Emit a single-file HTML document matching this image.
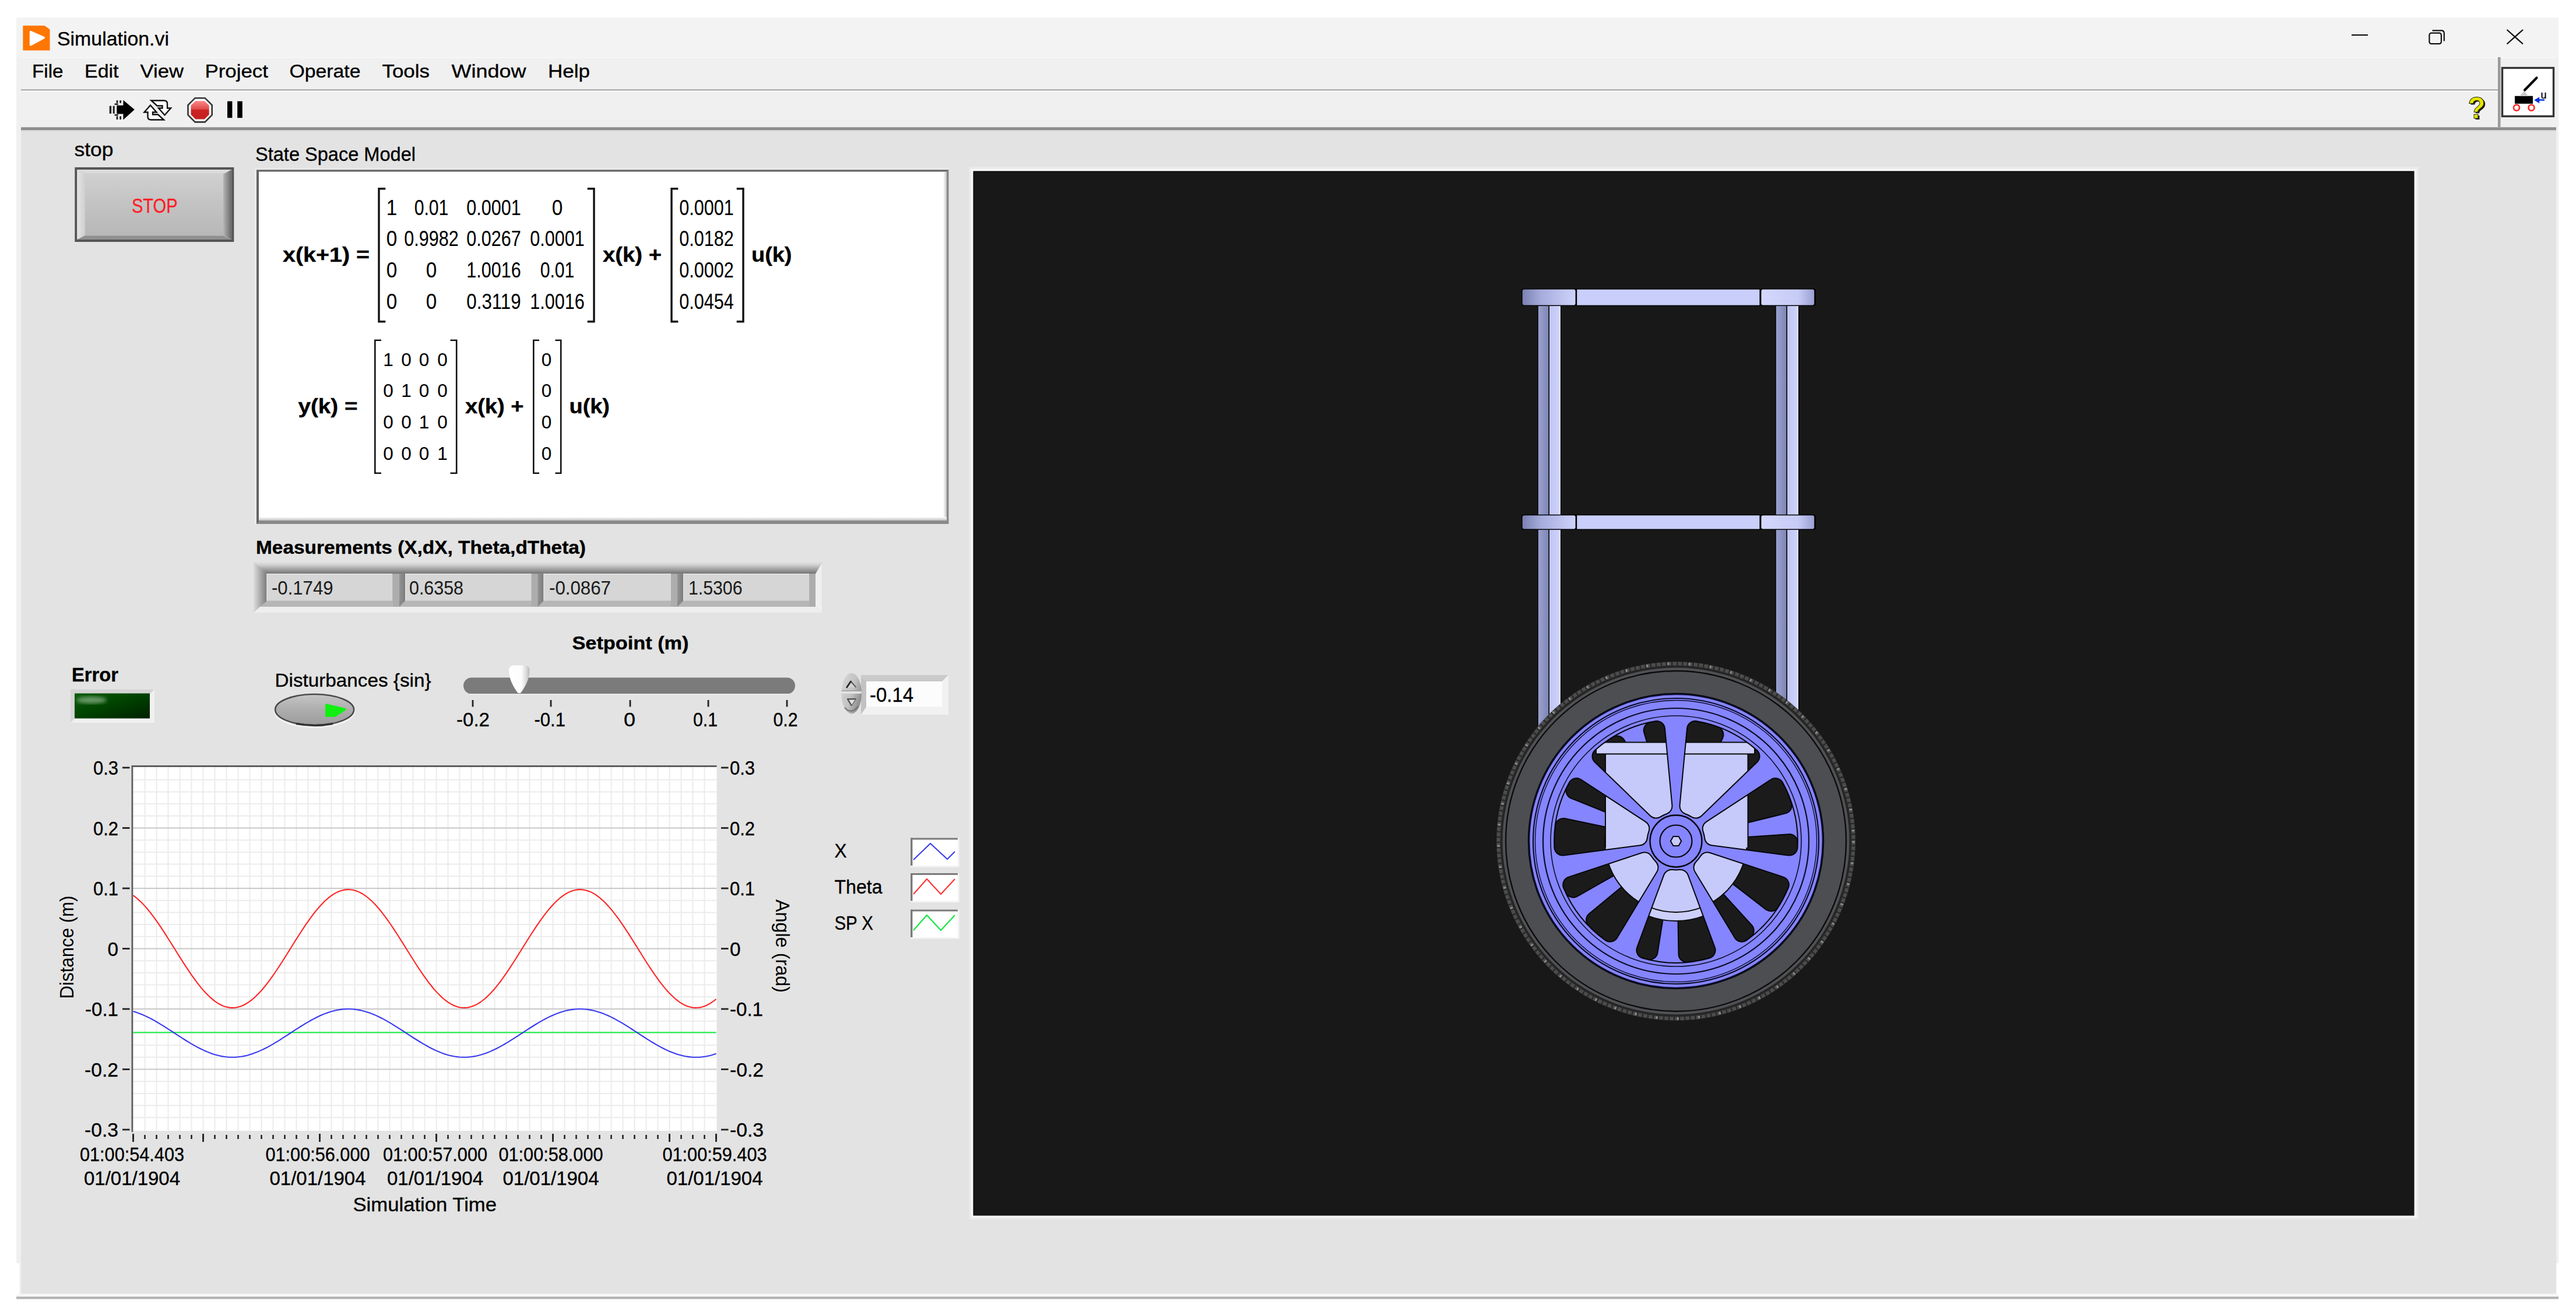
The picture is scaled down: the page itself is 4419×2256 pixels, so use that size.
<!DOCTYPE html>
<html><head><meta charset="utf-8"><title>Simulation.vi</title>
<style>
html,body{margin:0;padding:0;background:#fff;}
body{width:4419px;height:2256px;overflow:hidden;font-family:"Liberation Sans",sans-serif;}
svg{display:block;font-family:"Liberation Sans",sans-serif;}
text{white-space:pre;}
</style></head><body>
<svg width="4419" height="2256" viewBox="0 0 4419 2256">
<rect x="28.0" y="30.0" width="4361.0" height="2199.0" fill="#f0f0f0" />
<rect x="28.0" y="30.0" width="4361.0" height="68.0" fill="#f3f3f3" />
<rect x="28.0" y="2219.5" width="4361.0" height="5.0" fill="#f7f7f7" />
<rect x="28.0" y="2224.5" width="4361.0" height="4.0" fill="#b2b2b2" />
<rect x="36.0" y="223.0" width="4349.0" height="1996.5" fill="#e3e3e3" />
<rect x="28.0" y="2167.0" width="5.5" height="53.0" fill="#fff" />
<rect x="4385.5" y="2167.0" width="3.5" height="53.0" fill="#fff" />
<rect x="36.0" y="98.0" width="4353.0" height="1.5" fill="#f8f8f8" />
<rect x="36.0" y="153.3" width="4250.0" height="2.2" fill="#a0a0a0" />
<rect x="36.0" y="155.5" width="4250.0" height="2.0" fill="#f8f8f8" />
<rect x="4285.0" y="98.0" width="4.5" height="122.0" fill="#9a9a9a" />
<linearGradient id="tbl" x1="0" y1="0" x2="0" y2="1"><stop offset="0" stop-color="#b0b0b0"/><stop offset=".35" stop-color="#8a8a8a"/><stop offset="1" stop-color="#8e8e8e"/></linearGradient>
<rect x="36.0" y="218.0" width="4349.0" height="5.5" fill="url(#tbl)" />
<rect x="36.0" y="223.5" width="4349.0" height="2.0" fill="#dadada" />
<path d="M39.4 43.9 H76.6 L85.5 50.6 V86.6 H39.4 Z" fill="#ff7600"/>
<path d="M52.6 54.6 L75.2 64.7 L52.6 76.8 Z" fill="#fff" stroke="#fff" stroke-width="3.6" stroke-linejoin="round"/>
<text x="98.0" y="77.5" font-size="33.5" stroke="#000" stroke-width="0.35" fill="#000" text-anchor="start" textLength="192.0" lengthAdjust="spacingAndGlyphs" >Simulation.vi</text>
<rect x="4034.0" y="59.0" width="28.0" height="2.2" fill="#111" />
<rect x="4167.4" y="56.7" width="20.5" height="18.5" rx="3.5" fill="none" stroke="#111" stroke-width="2.2"/>
<path d="M4172.5 52.3 H4188 Q4192.8 52.3 4192.8 57 V70.5" fill="none" stroke="#111" stroke-width="2.2"/>
<path d="M4300.5 51 L4328 75.5 M4328 51 L4300.5 75.5" stroke="#111" stroke-width="2.3" fill="none"/>
<text x="55.0" y="133.0" font-size="30.8" stroke="#000" stroke-width="0.35" fill="#000" text-anchor="start" textLength="53.5" lengthAdjust="spacingAndGlyphs" >File</text>
<text x="145.0" y="133.0" font-size="30.8" stroke="#000" stroke-width="0.35" fill="#000" text-anchor="start" textLength="58.5" lengthAdjust="spacingAndGlyphs" >Edit</text>
<text x="240.5" y="133.0" font-size="30.8" stroke="#000" stroke-width="0.35" fill="#000" text-anchor="start" textLength="74.5" lengthAdjust="spacingAndGlyphs" >View</text>
<text x="351.5" y="133.0" font-size="30.8" stroke="#000" stroke-width="0.35" fill="#000" text-anchor="start" textLength="108.5" lengthAdjust="spacingAndGlyphs" >Project</text>
<text x="496.5" y="133.0" font-size="30.8" stroke="#000" stroke-width="0.35" fill="#000" text-anchor="start" textLength="122.0" lengthAdjust="spacingAndGlyphs" >Operate</text>
<text x="655.5" y="133.0" font-size="30.8" stroke="#000" stroke-width="0.35" fill="#000" text-anchor="start" textLength="81.5" lengthAdjust="spacingAndGlyphs" >Tools</text>
<text x="774.5" y="133.0" font-size="30.8" stroke="#000" stroke-width="0.35" fill="#000" text-anchor="start" textLength="128.0" lengthAdjust="spacingAndGlyphs" >Window</text>
<text x="940.0" y="133.0" font-size="30.8" stroke="#000" stroke-width="0.35" fill="#000" text-anchor="start" textLength="72.0" lengthAdjust="spacingAndGlyphs" >Help</text>
<path d="M200.3 180.7 H211.4 V171.7 L230.8 188 L211.4 205.5 V195.4 H200.3 Z" fill="#000"/>
<rect x="187.7" y="181.7" width="3.4" height="13.2" fill="#222" />
<rect x="193.7" y="181.7" width="3.0" height="13.2" fill="#222" />
<rect x="199.6" y="172.2" width="2.8" height="4.6" fill="#222" />
<rect x="199.6" y="199.4" width="2.8" height="5.6" fill="#222" />
<rect x="205.2" y="172.2" width="2.8" height="4.6" fill="#222" />
<rect x="205.2" y="199.4" width="2.8" height="5.6" fill="#222" />
<rect x="196.6" y="177.4" width="6.0" height="2.6" fill="#222" />
<rect x="196.6" y="196.0" width="6.0" height="2.6" fill="#222" />
<g fill="#fff" stroke="#111" stroke-width="2.4" stroke-linejoin="miter"><path d="M259.5 172.5 H281.5 Q287 172.5 287 178 V185.5 H293 L282.5 197.5 L272 185.5 H278.5 V181.5 H269.5 Z"/><path d="M281 205.5 H259 Q253.5 205.5 253.5 200 V192.5 H247.5 L258 180.5 L268.5 192.5 H262 V196.5 H271 Z"/></g>
<linearGradient id="abg" x1="0" y1="0" x2="0" y2="1"><stop offset="0" stop-color="#f88"/><stop offset=".45" stop-color="#e04a4a"/><stop offset=".5" stop-color="#cc2222"/><stop offset="1" stop-color="#c42020"/></linearGradient>
<polygon points="334.6,168.2 351.6,168.2 363.7,180.3 363.7,197.3 351.6,209.4 334.6,209.4 322.5,197.3 322.5,180.3" fill="#fafafa" stroke="#333" stroke-width="2.6"/>
<polygon points="335.3,173.2 350.9,173.2 358.7,181.0 358.7,196.6 350.9,204.4 335.3,204.4 327.5,196.6 327.5,181.0" fill="url(#abg)"/>
<rect x="390.0" y="173.7" width="8.4" height="28.5" fill="#000" />
<rect x="407.2" y="173.7" width="8.6" height="28.5" fill="#000" />
<text x="4236" y="205" font-size="52" font-weight="bold" fill="#1a1a1a" textLength="30" lengthAdjust="spacingAndGlyphs">?</text>
<text x="4233.5" y="202.5" font-size="52" font-weight="bold" fill="#e6e600" stroke="#2a2a00" stroke-width="1" textLength="30" lengthAdjust="spacingAndGlyphs">?</text>
<rect x="4292.5" y="116.5" width="88" height="83" fill="#fff" stroke="#333" stroke-width="3.4"/>
<rect x="4314.0" y="164.7" width="31.0" height="13.2" fill="#000" />
<path d="M4322 165 L4330.5 155.5 L4337 165 Z" fill="#ccc"/>
<line x1="4331.0" y1="154.5" x2="4351.5" y2="133.5" stroke="#000" stroke-width="4.2" stroke-linecap="round"/>
<circle cx="4317" cy="184.7" r="5" fill="#fff" stroke="#f22" stroke-width="2.6"/>
<circle cx="4342.5" cy="184.7" r="5" fill="#fff" stroke="#f22" stroke-width="2.6"/>
<path d="M4365 171.5 H4352 M4355 168.5 L4349.5 171.8 L4355 175.2 Z" stroke="#03d" stroke-width="2.4" fill="#03d"/>
<text x="4358.5" y="168.8" font-size="18" stroke="#000" stroke-width="0.35" fill="#000" text-anchor="start" textLength="10.0" lengthAdjust="spacingAndGlyphs" >u</text>
<text x="127.5" y="268.0" font-size="33.5" stroke="#000" stroke-width="0.35" fill="#000" text-anchor="start" textLength="67.0" lengthAdjust="spacingAndGlyphs" >stop</text>
<linearGradient id="sbf" x1="0" y1="0" x2="0" y2="1"><stop offset="0" stop-color="#d2d2d2"/><stop offset=".45" stop-color="#c4c4c4"/><stop offset="1" stop-color="#b6b6b6"/></linearGradient>
<linearGradient id="sbl" x1="0" y1="0" x2="1" y2="0"><stop offset="0" stop-color="#e4e4e4"/><stop offset="1" stop-color="#cfcfcf"/></linearGradient>
<linearGradient id="sbr" x1="0" y1="0" x2="1" y2="0"><stop offset="0" stop-color="#b4b4b4"/><stop offset="1" stop-color="#686868"/></linearGradient>
<rect x="128.3" y="287.0" width="273.0" height="128.0" fill="#555" />
<rect x="132.3" y="291.0" width="265.0" height="120.0" fill="url(#sbf)" />
<path d="M132.3 291 L146 299 V403 L132.3 411 Z" fill="url(#sbl)"/>
<path d="M397.3 291 L383 299 V403 L397.3 411 Z" fill="url(#sbr)"/>
<path d="M132.3 291 H397.3 L383 297 H146 Z" fill="#dcdcdc"/>
<path d="M132.3 411 H397.3 L383 404.5 H146 Z" fill="#909090"/>
<text x="226.0" y="365.4" font-size="35" stroke="#ff1c24" stroke-width="0.35" fill="#ff1c24" text-anchor="start" textLength="78.5" lengthAdjust="spacingAndGlyphs" >STOP</text>
<text x="438.0" y="276.0" font-size="33.5" stroke="#000" stroke-width="0.35" fill="#000" text-anchor="start" textLength="275.0" lengthAdjust="spacingAndGlyphs" >State Space Model</text>
<rect x="436.0" y="288.0" width="1192.0" height="612.0" fill="#e9e9e9" />
<rect x="440.0" y="291.5" width="1187.5" height="607.5" fill="#8a8a8a" />
<path d="M440 291.5 H1627.5 L1624 294.6 H444 V895 L440 899 Z" fill="#646464"/>
<linearGradient id="ssr" x1="0" y1="0" x2="1" y2="0"><stop offset="0" stop-color="#fff"/><stop offset="1" stop-color="#c4c4c4"/></linearGradient>
<linearGradient id="ssb" x1="0" y1="0" x2="0" y2="1"><stop offset="0" stop-color="#fff"/><stop offset="1" stop-color="#c4c4c4"/></linearGradient>
<rect x="444.0" y="294.6" width="1180.0" height="598.0" fill="#fff" />
<rect x="1618.0" y="295.0" width="6.0" height="597.5" fill="url(#ssr)" />
<rect x="444.5" y="887.0" width="1179.5" height="5.5" fill="url(#ssb)" />
<text x="485.0" y="449.0" font-size="34.5" font-weight="bold" stroke="#000" stroke-width="0.4" fill="#000" text-anchor="start" textLength="149.0" lengthAdjust="spacingAndGlyphs" >x(k+1) =</text>
<path d="M661.3 323.7 H650.0 V551.8 H661.3 M1007.7 323.7 H1019.0 V551.8 H1007.7" fill="none" stroke="#111" stroke-width="3.4"/>
<text x="672.0" y="368.6" font-size="36" stroke="#000" stroke-width="0.1" fill="#000" text-anchor="middle" textLength="18.5" lengthAdjust="spacingAndGlyphs" >1</text>
<text x="740.0" y="368.6" font-size="36" stroke="#000" stroke-width="0.1" fill="#000" text-anchor="middle" textLength="58.7" lengthAdjust="spacingAndGlyphs" >0.01</text>
<text x="847.0" y="368.6" font-size="36" stroke="#000" stroke-width="0.1" fill="#000" text-anchor="middle" textLength="93.3" lengthAdjust="spacingAndGlyphs" >0.0001</text>
<text x="956.0" y="368.6" font-size="36" stroke="#000" stroke-width="0.1" fill="#000" text-anchor="middle" textLength="18.5" lengthAdjust="spacingAndGlyphs" >0</text>
<text x="672.0" y="422.3" font-size="36" stroke="#000" stroke-width="0.1" fill="#000" text-anchor="middle" textLength="18.5" lengthAdjust="spacingAndGlyphs" >0</text>
<text x="740.0" y="422.3" font-size="36" stroke="#000" stroke-width="0.1" fill="#000" text-anchor="middle" textLength="93.3" lengthAdjust="spacingAndGlyphs" >0.9982</text>
<text x="847.0" y="422.3" font-size="36" stroke="#000" stroke-width="0.1" fill="#000" text-anchor="middle" textLength="93.3" lengthAdjust="spacingAndGlyphs" >0.0267</text>
<text x="956.0" y="422.3" font-size="36" stroke="#000" stroke-width="0.1" fill="#000" text-anchor="middle" textLength="93.3" lengthAdjust="spacingAndGlyphs" >0.0001</text>
<text x="672.0" y="476.0" font-size="36" stroke="#000" stroke-width="0.1" fill="#000" text-anchor="middle" textLength="18.5" lengthAdjust="spacingAndGlyphs" >0</text>
<text x="740.0" y="476.0" font-size="36" stroke="#000" stroke-width="0.1" fill="#000" text-anchor="middle" textLength="18.5" lengthAdjust="spacingAndGlyphs" >0</text>
<text x="847.0" y="476.0" font-size="36" stroke="#000" stroke-width="0.1" fill="#000" text-anchor="middle" textLength="93.3" lengthAdjust="spacingAndGlyphs" >1.0016</text>
<text x="956.0" y="476.0" font-size="36" stroke="#000" stroke-width="0.1" fill="#000" text-anchor="middle" textLength="58.7" lengthAdjust="spacingAndGlyphs" >0.01</text>
<text x="672.0" y="529.7" font-size="36" stroke="#000" stroke-width="0.1" fill="#000" text-anchor="middle" textLength="18.5" lengthAdjust="spacingAndGlyphs" >0</text>
<text x="740.0" y="529.7" font-size="36" stroke="#000" stroke-width="0.1" fill="#000" text-anchor="middle" textLength="18.5" lengthAdjust="spacingAndGlyphs" >0</text>
<text x="847.0" y="529.7" font-size="36" stroke="#000" stroke-width="0.1" fill="#000" text-anchor="middle" textLength="93.3" lengthAdjust="spacingAndGlyphs" >0.3119</text>
<text x="956.0" y="529.7" font-size="36" stroke="#000" stroke-width="0.1" fill="#000" text-anchor="middle" textLength="93.3" lengthAdjust="spacingAndGlyphs" >1.0016</text>
<text x="1034.0" y="449.0" font-size="34.5" font-weight="bold" stroke="#000" stroke-width="0.4" fill="#000" text-anchor="start" textLength="101.0" lengthAdjust="spacingAndGlyphs" >x(k) +</text>
<path d="M1163.3 323.7 H1152.0 V551.8 H1163.3 M1263.7 323.7 H1275.0 V551.8 H1263.7" fill="none" stroke="#111" stroke-width="3.4"/>
<text x="1212.0" y="368.6" font-size="36" stroke="#000" stroke-width="0.1" fill="#000" text-anchor="middle" textLength="93.3" lengthAdjust="spacingAndGlyphs" >0.0001</text>
<text x="1212.0" y="422.3" font-size="36" stroke="#000" stroke-width="0.1" fill="#000" text-anchor="middle" textLength="93.3" lengthAdjust="spacingAndGlyphs" >0.0182</text>
<text x="1212.0" y="476.0" font-size="36" stroke="#000" stroke-width="0.1" fill="#000" text-anchor="middle" textLength="93.3" lengthAdjust="spacingAndGlyphs" >0.0002</text>
<text x="1212.0" y="529.7" font-size="36" stroke="#000" stroke-width="0.1" fill="#000" text-anchor="middle" textLength="93.3" lengthAdjust="spacingAndGlyphs" >0.0454</text>
<text x="1289.0" y="449.0" font-size="34.5" font-weight="bold" stroke="#000" stroke-width="0.4" fill="#000" text-anchor="start" textLength="69.5" lengthAdjust="spacingAndGlyphs" >u(k)</text>
<text x="511.5" y="709.0" font-size="34.5" font-weight="bold" stroke="#000" stroke-width="0.4" fill="#000" text-anchor="start" textLength="102.0" lengthAdjust="spacingAndGlyphs" >y(k) =</text>
<path d="M654.0 583.8 H643.3 V811.7 H654.0 M772.5 583.8 H783.2 V811.7 H772.5" fill="none" stroke="#111" stroke-width="2.6"/>
<text x="666.0" y="627.5" font-size="31.5" stroke="#000" stroke-width="0.1" fill="#000" text-anchor="middle" textLength="17.5" lengthAdjust="spacingAndGlyphs" >1</text>
<text x="697.0" y="627.5" font-size="31.5" stroke="#000" stroke-width="0.1" fill="#000" text-anchor="middle" textLength="17.5" lengthAdjust="spacingAndGlyphs" >0</text>
<text x="727.5" y="627.5" font-size="31.5" stroke="#000" stroke-width="0.1" fill="#000" text-anchor="middle" textLength="17.5" lengthAdjust="spacingAndGlyphs" >0</text>
<text x="759.0" y="627.5" font-size="31.5" stroke="#000" stroke-width="0.1" fill="#000" text-anchor="middle" textLength="17.5" lengthAdjust="spacingAndGlyphs" >0</text>
<text x="666.0" y="681.3" font-size="31.5" stroke="#000" stroke-width="0.1" fill="#000" text-anchor="middle" textLength="17.5" lengthAdjust="spacingAndGlyphs" >0</text>
<text x="697.0" y="681.3" font-size="31.5" stroke="#000" stroke-width="0.1" fill="#000" text-anchor="middle" textLength="17.5" lengthAdjust="spacingAndGlyphs" >1</text>
<text x="727.5" y="681.3" font-size="31.5" stroke="#000" stroke-width="0.1" fill="#000" text-anchor="middle" textLength="17.5" lengthAdjust="spacingAndGlyphs" >0</text>
<text x="759.0" y="681.3" font-size="31.5" stroke="#000" stroke-width="0.1" fill="#000" text-anchor="middle" textLength="17.5" lengthAdjust="spacingAndGlyphs" >0</text>
<text x="666.0" y="735.1" font-size="31.5" stroke="#000" stroke-width="0.1" fill="#000" text-anchor="middle" textLength="17.5" lengthAdjust="spacingAndGlyphs" >0</text>
<text x="697.0" y="735.1" font-size="31.5" stroke="#000" stroke-width="0.1" fill="#000" text-anchor="middle" textLength="17.5" lengthAdjust="spacingAndGlyphs" >0</text>
<text x="727.5" y="735.1" font-size="31.5" stroke="#000" stroke-width="0.1" fill="#000" text-anchor="middle" textLength="17.5" lengthAdjust="spacingAndGlyphs" >1</text>
<text x="759.0" y="735.1" font-size="31.5" stroke="#000" stroke-width="0.1" fill="#000" text-anchor="middle" textLength="17.5" lengthAdjust="spacingAndGlyphs" >0</text>
<text x="666.0" y="788.9" font-size="31.5" stroke="#000" stroke-width="0.1" fill="#000" text-anchor="middle" textLength="17.5" lengthAdjust="spacingAndGlyphs" >0</text>
<text x="697.0" y="788.9" font-size="31.5" stroke="#000" stroke-width="0.1" fill="#000" text-anchor="middle" textLength="17.5" lengthAdjust="spacingAndGlyphs" >0</text>
<text x="727.5" y="788.9" font-size="31.5" stroke="#000" stroke-width="0.1" fill="#000" text-anchor="middle" textLength="17.5" lengthAdjust="spacingAndGlyphs" >0</text>
<text x="759.0" y="788.9" font-size="31.5" stroke="#000" stroke-width="0.1" fill="#000" text-anchor="middle" textLength="17.5" lengthAdjust="spacingAndGlyphs" >1</text>
<text x="798.0" y="709.0" font-size="34.5" font-weight="bold" stroke="#000" stroke-width="0.4" fill="#000" text-anchor="start" textLength="100.5" lengthAdjust="spacingAndGlyphs" >x(k) +</text>
<path d="M925.0 583.8 H915.3 V811.7 H925.0 M952.5 583.8 H962.2 V811.7 H952.5" fill="none" stroke="#111" stroke-width="2.6"/>
<text x="937.5" y="627.5" font-size="31.5" stroke="#000" stroke-width="0.1" fill="#000" text-anchor="middle" textLength="17.5" lengthAdjust="spacingAndGlyphs" >0</text>
<text x="937.5" y="681.3" font-size="31.5" stroke="#000" stroke-width="0.1" fill="#000" text-anchor="middle" textLength="17.5" lengthAdjust="spacingAndGlyphs" >0</text>
<text x="937.5" y="735.1" font-size="31.5" stroke="#000" stroke-width="0.1" fill="#000" text-anchor="middle" textLength="17.5" lengthAdjust="spacingAndGlyphs" >0</text>
<text x="937.5" y="788.9" font-size="31.5" stroke="#000" stroke-width="0.1" fill="#000" text-anchor="middle" textLength="17.5" lengthAdjust="spacingAndGlyphs" >0</text>
<text x="976.5" y="709.0" font-size="34.5" font-weight="bold" stroke="#000" stroke-width="0.4" fill="#000" text-anchor="start" textLength="69.5" lengthAdjust="spacingAndGlyphs" >u(k)</text>
<text x="439.0" y="950.0" font-size="31" font-weight="bold" stroke="#000" stroke-width="0.4" fill="#000" text-anchor="start" textLength="566.0" lengthAdjust="spacingAndGlyphs" >Measurements (X,dX, Theta,dTheta)</text>
<linearGradient id="art" x1="0" y1="0" x2="0" y2="1"><stop offset="0" stop-color="#e2e2e2"/><stop offset=".25" stop-color="#d0d0d0"/><stop offset="1" stop-color="#727272"/></linearGradient>
<linearGradient id="arl" x1="0" y1="0" x2="1" y2="0"><stop offset="0" stop-color="#dcdcdc"/><stop offset=".3" stop-color="#c0c0c0"/><stop offset="1" stop-color="#7c7c7c"/></linearGradient>
<linearGradient id="arg" x1="0" y1="0" x2="1" y2="0"><stop offset="0" stop-color="#949494"/><stop offset="1" stop-color="#7c7c7c"/></linearGradient>
<rect x="435.0" y="964.0" width="975.5" height="87.0" fill="#b6b6b6" />
<path d="M435 964 H1410.5 L1399 984.5 H457.5 Z" fill="url(#art)"/>
<path d="M435 964 L457.5 984.5 V1031 L435 1051 Z" fill="url(#arl)"/>
<path d="M435 1051 L446 1041 H1399 L1410.5 1051 Z" fill="#eeeeee"/>
<path d="M1399 984.5 L1410.5 965 V1051 L1399 1041 Z" fill="#efefef"/>
<rect x="1388.7" y="984.5" width="10.3" height="56.5" fill="#adadad" />
<rect x="457.5" y="984.0" width="215.5" height="46.6" fill="#d6d6d6" />
<rect x="457.5" y="984.0" width="215.5" height="1.6" fill="#e2e2e2" />
<rect x="457.5" y="984.0" width="1.6" height="46.6" fill="#e2e2e2" />
<text x="466.0" y="1019.5" font-size="33" stroke="#1c1c1c" stroke-width="0.1" fill="#1c1c1c" text-anchor="start" textLength="105.5" lengthAdjust="spacingAndGlyphs" >-0.1749</text>
<rect x="674.0" y="984.5" width="11.0" height="56.5" fill="#adadad" />
<rect x="685.0" y="984.5" width="10.0" height="46.5" fill="url(#arg)" />
<path d="M685 1031 H695 L685 1041 Z" fill="#8a8a8a"/>
<rect x="695.0" y="984.0" width="217.0" height="46.6" fill="#d6d6d6" />
<rect x="695.0" y="984.0" width="217.0" height="1.6" fill="#e2e2e2" />
<rect x="695.0" y="984.0" width="1.6" height="46.6" fill="#e2e2e2" />
<text x="702.0" y="1019.5" font-size="33" stroke="#1c1c1c" stroke-width="0.1" fill="#1c1c1c" text-anchor="start" textLength="93.0" lengthAdjust="spacingAndGlyphs" >0.6358</text>
<rect x="911.5" y="984.5" width="11.0" height="56.5" fill="#adadad" />
<rect x="922.5" y="984.5" width="10.0" height="46.5" fill="url(#arg)" />
<path d="M922.5 1031 H932.5 L922.5 1041 Z" fill="#8a8a8a"/>
<rect x="932.5" y="984.0" width="218.5" height="46.6" fill="#d6d6d6" />
<rect x="932.5" y="984.0" width="218.5" height="1.6" fill="#e2e2e2" />
<rect x="932.5" y="984.0" width="1.6" height="46.6" fill="#e2e2e2" />
<text x="942.0" y="1019.5" font-size="33" stroke="#1c1c1c" stroke-width="0.1" fill="#1c1c1c" text-anchor="start" textLength="106.0" lengthAdjust="spacingAndGlyphs" >-0.0867</text>
<rect x="1151.0" y="984.5" width="11.0" height="56.5" fill="#adadad" />
<rect x="1162.0" y="984.5" width="10.0" height="46.5" fill="url(#arg)" />
<path d="M1162 1031 H1172 L1162 1041 Z" fill="#8a8a8a"/>
<rect x="1172.0" y="984.0" width="216.0" height="46.6" fill="#d6d6d6" />
<rect x="1172.0" y="984.0" width="216.0" height="1.6" fill="#e2e2e2" />
<rect x="1172.0" y="984.0" width="1.6" height="46.6" fill="#e2e2e2" />
<text x="1181.0" y="1019.5" font-size="33" stroke="#1c1c1c" stroke-width="0.1" fill="#1c1c1c" text-anchor="start" textLength="92.5" lengthAdjust="spacingAndGlyphs" >1.5306</text>
<text x="123.0" y="1169.0" font-size="33" font-weight="bold" stroke="#000" stroke-width="0.4" fill="#000" text-anchor="start" textLength="80.0" lengthAdjust="spacingAndGlyphs" >Error</text>
<rect x="121.0" y="1182.5" width="144.0" height="57.5" fill="#f0f0f0" />
<path d="M121 1182.5 H265 L258 1189.5 H128 V1232.5 L121 1240 Z" fill="#d4d4d4"/>
<linearGradient id="led" x1="0" y1="0" x2="1" y2="1"><stop offset="0" stop-color="#0c5c0c"/><stop offset=".45" stop-color="#004400"/><stop offset="1" stop-color="#002000"/></linearGradient>
<radialGradient id="ledh" cx="0.22" cy="0.27" r="0.35" gradientTransform="scale(1 0.45) translate(0 0.33)"><stop offset="0" stop-color="#cfe3cf" stop-opacity=".75"/><stop offset="1" stop-color="#0a5a0a" stop-opacity="0"/></radialGradient>
<rect x="128.0" y="1189.5" width="129.0" height="43.0" fill="url(#led)" />
<ellipse cx="157" cy="1201" rx="26" ry="6" fill="#b8d4b8" opacity=".55" filter="url(#blur2)"/>
<filter id="blur2"><feGaussianBlur stdDeviation="3"/></filter>
<text x="471.5" y="1177.5" font-size="32" stroke="#000" stroke-width="0.35" fill="#000" text-anchor="start" textLength="268.0" lengthAdjust="spacingAndGlyphs" >Disturbances {sin}</text>
<linearGradient id="tg" x1="0" y1="0" x2="0" y2="1"><stop offset="0" stop-color="#c6c6c6"/><stop offset=".5" stop-color="#adadad"/><stop offset="1" stop-color="#9c9c9c"/></linearGradient>
<ellipse cx="539.5" cy="1220.5" rx="70" ry="28.5" fill="#f4f4f4" opacity=".8"/>
<ellipse cx="539.6" cy="1217.6" rx="67.5" ry="26.6" fill="url(#tg)" stroke="#4a4a4a" stroke-width="2.6"/>
<path d="M508 1241.5 Q539.6 1247.5 571 1241.5" fill="none" stroke="#333" stroke-width="3.4"/>
<path d="M560 1209.5 L591.5 1217 L574 1228 H560 Z" fill="#10f010" stroke="#10f010" stroke-width="4" stroke-linejoin="round"/>
<text x="981.5" y="1114.0" font-size="32" font-weight="bold" stroke="#000" stroke-width="0.4" fill="#000" text-anchor="start" textLength="200.0" lengthAdjust="spacingAndGlyphs" >Setpoint (m)</text>
<rect x="795.0" y="1162.5" width="569.0" height="28.0" fill="#7b7b7b" rx="14"/>
<rect x="806.0" y="1190.3" width="547.0" height="1.8" fill="#efefef" />
<linearGradient id="thm" x1="0" y1="0" x2="1" y2="0"><stop offset="0" stop-color="#fff"/><stop offset=".6" stop-color="#fdfdfd"/><stop offset=".85" stop-color="#d8d8d8"/><stop offset="1" stop-color="#b8b8b8"/></linearGradient>
<path d="M873 1150 Q873 1141.5 882 1141.5 H900 Q908.5 1141.5 908.5 1150 Q908.5 1168 893.5 1188.5 Q890.5 1190 888 1188.5 Q873 1168 873 1150 Z" fill="url(#thm)"/>
<rect x="809.6" y="1201.0" width="2.8" height="11.5" fill="#222" />
<rect x="943.6" y="1201.0" width="2.8" height="11.5" fill="#222" />
<rect x="1079.6" y="1201.0" width="2.8" height="11.5" fill="#222" />
<rect x="1213.6" y="1201.0" width="2.8" height="11.5" fill="#222" />
<rect x="1348.6" y="1201.0" width="2.8" height="11.5" fill="#222" />
<text x="783.0" y="1246.0" font-size="33" stroke="#000" stroke-width="0.35" fill="#000" text-anchor="start" textLength="57.0" lengthAdjust="spacingAndGlyphs" >-0.2</text>
<text x="916.5" y="1246.0" font-size="33" stroke="#000" stroke-width="0.35" fill="#000" text-anchor="start" textLength="53.5" lengthAdjust="spacingAndGlyphs" >-0.1</text>
<text x="1070.0" y="1246.0" font-size="33" stroke="#000" stroke-width="0.35" fill="#000" text-anchor="start" textLength="20.0" lengthAdjust="spacingAndGlyphs" >0</text>
<text x="1189.0" y="1246.0" font-size="33" stroke="#000" stroke-width="0.35" fill="#000" text-anchor="start" textLength="42.0" lengthAdjust="spacingAndGlyphs" >0.1</text>
<text x="1326.5" y="1246.0" font-size="33" stroke="#000" stroke-width="0.35" fill="#000" text-anchor="start" textLength="42.0" lengthAdjust="spacingAndGlyphs" >0.2</text>
<linearGradient id="nct" x1="0" y1="0" x2="0" y2="1"><stop offset="0" stop-color="#cccccc"/><stop offset="1" stop-color="#b2b2b2"/></linearGradient>
<rect x="1477.0" y="1158.0" width="150.0" height="68.0" fill="#f1f1f1" />
<path d="M1477 1158 H1627 L1616 1169 H1486 V1212.5 L1477 1225.5 Z" fill="url(#nct)"/>
<path d="M1477 1163 L1486 1169 V1212.5 L1477 1225.5 Z" fill="#c2c2c2"/>
<rect x="1486.0" y="1169.0" width="130.0" height="43.5" fill="#fcfcfc" />
<text x="1492.0" y="1204.0" font-size="34.5" stroke="#000" stroke-width="0.35" fill="#000" text-anchor="start" textLength="75.0" lengthAdjust="spacingAndGlyphs" >-0.14</text>
<linearGradient id="spn" x1="0" y1="0" x2="1" y2="0.6"><stop offset="0" stop-color="#d8d8d8"/><stop offset=".6" stop-color="#c2c2c2"/><stop offset="1" stop-color="#8c8c8c"/></linearGradient>
<clipPath id="spu"><rect x="1440" y="1150" width="40" height="36"/></clipPath><clipPath id="spd"><rect x="1440" y="1190" width="40" height="38"/></clipPath>
<ellipse cx="1460.7" cy="1189.5" rx="17.3" ry="35" fill="url(#spn)" clip-path="url(#spu)"/>
<ellipse cx="1460.7" cy="1189.5" rx="17.3" ry="35" fill="url(#spn)" clip-path="url(#spd)"/>
<path d="M1449 1214 Q1460 1226.5 1472 1212" fill="none" stroke="#6a6a6a" stroke-width="2.4" opacity=".8"/>
<path d="M1443.6 1185.3 H1477.8" stroke="#9c9c9c" stroke-width="1.6"/>
<path d="M1452.6 1179.2 L1459.5 1169 L1468.4 1179.2" fill="#d4d4d4" stroke="#555" stroke-width="2" stroke-linejoin="round"/>
<path d="M1452.6 1179.2 L1459.5 1169" fill="none" stroke="#222" stroke-width="2.6" stroke-linecap="round"/>
<path d="M1454 1199.2 H1468.4 L1460.8 1210.8 Z" fill="#e2e2e2" stroke="#777" stroke-width="1.6" stroke-linejoin="round"/>
<path d="M1468 1199.2 H1454 L1460.4 1210" fill="none" stroke="#555" stroke-width="2.4" stroke-linejoin="round"/>
<rect x="227.5" y="1315.0" width="1002.0" height="625.0" fill="#fff" />
<path d="M348.5 1315 V1940 M328.5 1315 V1940 M308.5 1315 V1940 M288.5 1315 V1940 M268.5 1315 V1940 M248.5 1315 V1940 M368.5 1315 V1940 M388.5 1315 V1940 M408.5 1315 V1940 M428.5 1315 V1940 M448.5 1315 V1940 M468.5 1315 V1940 M488.5 1315 V1940 M508.5 1315 V1940 M528.5 1315 V1940 M548.5 1315 V1940 M568.5 1315 V1940 M588.5 1315 V1940 M608.5 1315 V1940 M628.5 1315 V1940 M648.5 1315 V1940 M668.5 1315 V1940 M688.5 1315 V1940 M708.5 1315 V1940 M728.5 1315 V1940 M748.5 1315 V1940 M768.5 1315 V1940 M788.5 1315 V1940 M808.5 1315 V1940 M828.5 1315 V1940 M848.5 1315 V1940 M868.5 1315 V1940 M888.5 1315 V1940 M908.5 1315 V1940 M928.5 1315 V1940 M948.5 1315 V1940 M968.5 1315 V1940 M988.5 1315 V1940 M1008.5 1315 V1940 M1028.5 1315 V1940 M1048.5 1315 V1940 M1068.5 1315 V1940 M1088.5 1315 V1940 M1108.5 1315 V1940 M1128.5 1315 V1940 M1148.5 1315 V1940 M1168.5 1315 V1940 M1188.5 1315 V1940 M1208.5 1315 V1940 M227.5 1917.3 H1229.5 M227.5 1896.6 H1229.5 M227.5 1875.9 H1229.5 M227.5 1855.2 H1229.5 M227.5 1813.8 H1229.5 M227.5 1793.1 H1229.5 M227.5 1772.4 H1229.5 M227.5 1751.7 H1229.5 M227.5 1710.3 H1229.5 M227.5 1689.6 H1229.5 M227.5 1668.9 H1229.5 M227.5 1648.2 H1229.5 M227.5 1606.8 H1229.5 M227.5 1586.1 H1229.5 M227.5 1565.4 H1229.5 M227.5 1544.7 H1229.5 M227.5 1503.3 H1229.5 M227.5 1482.6 H1229.5 M227.5 1461.9 H1229.5 M227.5 1441.2 H1229.5 M227.5 1399.8 H1229.5 M227.5 1379.1 H1229.5 M227.5 1358.4 H1229.5 M227.5 1337.7 H1229.5" stroke="#ececec" stroke-width="2" fill="none"/>
<line x1="227.5" y1="1420.5" x2="1229.5" y2="1420.5" stroke="#c8c8c8" stroke-width="2.2" />
<line x1="227.5" y1="1524.0" x2="1229.5" y2="1524.0" stroke="#c8c8c8" stroke-width="2.2" />
<line x1="227.5" y1="1627.5" x2="1229.5" y2="1627.5" stroke="#c8c8c8" stroke-width="2.2" />
<line x1="227.5" y1="1731.0" x2="1229.5" y2="1731.0" stroke="#c8c8c8" stroke-width="2.2" />
<line x1="227.5" y1="1834.5" x2="1229.5" y2="1834.5" stroke="#c8c8c8" stroke-width="2.2" />
<line x1="228.5" y1="1771.2" x2="1228.5" y2="1771.2" stroke="#10f040" stroke-width="2.1" />
<polyline points="228.5,1735.1 232.5,1736.3 236.5,1737.7 240.5,1739.2 244.5,1740.8 248.5,1742.6 252.5,1744.5 256.5,1746.4 260.5,1748.5 264.5,1750.7 268.5,1753.0 272.5,1755.3 276.5,1757.8 280.5,1760.2 284.5,1762.8 288.5,1765.3 292.5,1767.9 296.5,1770.5 300.5,1773.1 304.5,1775.8 308.5,1778.4 312.5,1780.9 316.5,1783.5 320.5,1786.0 324.5,1788.4 328.5,1790.8 332.5,1793.1 336.5,1795.3 340.5,1797.5 344.5,1799.5 348.5,1801.4 352.5,1803.2 356.5,1804.9 360.5,1806.5 364.5,1807.9 368.5,1809.2 372.5,1810.3 376.5,1811.3 380.5,1812.1 384.5,1812.8 388.5,1813.3 392.5,1813.6 396.5,1813.8 400.5,1813.8 404.5,1813.6 408.5,1813.3 412.5,1812.8 416.5,1812.2 420.5,1811.4 424.5,1810.4 428.5,1809.3 432.5,1808.0 436.5,1806.6 440.5,1805.1 444.5,1803.4 448.5,1801.6 452.5,1799.7 456.5,1797.7 460.5,1795.6 464.5,1793.4 468.5,1791.1 472.5,1788.7 476.5,1786.3 480.5,1783.8 484.5,1781.2 488.5,1778.7 492.5,1776.1 496.5,1773.5 500.5,1770.8 504.5,1768.2 508.5,1765.6 512.5,1763.1 516.5,1760.5 520.5,1758.1 524.5,1755.6 528.5,1753.3 532.5,1751.0 536.5,1748.8 540.5,1746.7 544.5,1744.7 548.5,1742.8 552.5,1741.0 556.5,1739.4 560.5,1737.9 564.5,1736.5 568.5,1735.3 572.5,1734.2 576.5,1733.3 580.5,1732.5 584.5,1731.9 588.5,1731.4 592.5,1731.1 596.5,1731.0 600.5,1731.0 604.5,1731.3 608.5,1731.6 612.5,1732.2 616.5,1732.9 620.5,1733.7 624.5,1734.7 628.5,1735.9 632.5,1737.2 636.5,1738.6 640.5,1740.2 644.5,1741.9 648.5,1743.7 652.5,1745.7 656.5,1747.7 660.5,1749.9 664.5,1752.1 668.5,1754.4 672.5,1756.8 676.5,1759.3 680.5,1761.8 684.5,1764.4 688.5,1766.9 692.5,1769.5 696.5,1772.2 700.5,1774.8 704.5,1777.4 708.5,1780.0 712.5,1782.5 716.5,1785.0 720.5,1787.5 724.5,1789.9 728.5,1792.2 732.5,1794.5 736.5,1796.7 740.5,1798.7 744.5,1800.7 748.5,1802.6 752.5,1804.3 756.5,1805.9 760.5,1807.4 764.5,1808.7 768.5,1809.9 772.5,1810.9 776.5,1811.8 780.5,1812.5 784.5,1813.1 788.5,1813.5 792.5,1813.7 796.5,1813.8 800.5,1813.7 804.5,1813.4 808.5,1813.0 812.5,1812.4 816.5,1811.7 820.5,1810.8 824.5,1809.7 828.5,1808.5 832.5,1807.2 836.5,1805.7 840.5,1804.1 844.5,1802.3 848.5,1800.5 852.5,1798.5 856.5,1796.4 860.5,1794.2 864.5,1792.0 868.5,1789.6 872.5,1787.2 876.5,1784.7 880.5,1782.2 884.5,1779.6 888.5,1777.1 892.5,1774.4 896.5,1771.8 900.5,1769.2 904.5,1766.6 908.5,1764.0 912.5,1761.5 916.5,1759.0 920.5,1756.5 924.5,1754.2 928.5,1751.8 932.5,1749.6 936.5,1747.5 940.5,1745.4 944.5,1743.5 948.5,1741.7 952.5,1740.0 956.5,1738.4 960.5,1737.0 964.5,1735.7 968.5,1734.6 972.5,1733.6 976.5,1732.8 980.5,1732.1 984.5,1731.6 988.5,1731.2 992.5,1731.0 996.5,1731.0 1000.5,1731.2 1004.5,1731.5 1008.5,1731.9 1012.5,1732.6 1016.5,1733.4 1020.5,1734.3 1024.5,1735.4 1028.5,1736.7 1032.5,1738.1 1036.5,1739.6 1040.5,1741.3 1044.5,1743.0 1048.5,1744.9 1052.5,1747.0 1056.5,1749.1 1060.5,1751.3 1064.5,1753.6 1068.5,1755.9 1072.5,1758.4 1076.5,1760.9 1080.5,1763.4 1084.5,1766.0 1088.5,1768.6 1092.5,1771.2 1096.5,1773.8 1100.5,1776.4 1104.5,1779.0 1108.5,1781.6 1112.5,1784.1 1116.5,1786.6 1120.5,1789.0 1124.5,1791.4 1128.5,1793.7 1132.5,1795.9 1136.5,1798.0 1140.5,1800.0 1144.5,1801.9 1148.5,1803.7 1152.5,1805.3 1156.5,1806.8 1160.5,1808.2 1164.5,1809.5 1168.5,1810.5 1172.5,1811.5 1176.5,1812.3 1180.5,1812.9 1184.5,1813.4 1188.5,1813.7 1192.5,1813.8 1196.5,1813.8 1200.5,1813.6 1204.5,1813.2 1208.5,1812.7 1212.5,1812.0 1216.5,1811.2 1220.5,1810.2 1224.5,1809.0 1228.5,1807.7" fill="none" stroke="#3838f0" stroke-width="2.1" stroke-linejoin="round"/>
<polyline points="228.5,1536.2 232.5,1539.2 236.5,1542.5 240.5,1546.2 244.5,1550.1 248.5,1554.4 252.5,1559.0 256.5,1563.9 260.5,1569.0 264.5,1574.4 268.5,1579.9 272.5,1585.7 276.5,1591.6 280.5,1597.7 284.5,1603.9 288.5,1610.2 292.5,1616.5 296.5,1622.9 300.5,1629.3 304.5,1635.7 308.5,1642.1 312.5,1648.4 316.5,1654.6 320.5,1660.7 324.5,1666.7 328.5,1672.6 332.5,1678.2 336.5,1683.7 340.5,1688.9 344.5,1693.9 348.5,1698.6 352.5,1703.0 356.5,1707.1 360.5,1710.9 364.5,1714.4 368.5,1717.6 372.5,1720.3 376.5,1722.7 380.5,1724.7 384.5,1726.4 388.5,1727.6 392.5,1728.4 396.5,1728.9 400.5,1728.9 404.5,1728.5 408.5,1727.7 412.5,1726.5 416.5,1725.0 420.5,1723.0 424.5,1720.6 428.5,1717.9 432.5,1714.8 436.5,1711.4 440.5,1707.6 444.5,1703.5 448.5,1699.2 452.5,1694.5 456.5,1689.5 460.5,1684.3 464.5,1678.9 468.5,1673.3 472.5,1667.5 476.5,1661.5 480.5,1655.4 484.5,1649.2 488.5,1642.9 492.5,1636.5 496.5,1630.1 500.5,1623.7 504.5,1617.3 508.5,1610.9 512.5,1604.7 516.5,1598.5 520.5,1592.4 524.5,1586.4 528.5,1580.7 532.5,1575.1 536.5,1569.7 540.5,1564.5 544.5,1559.6 548.5,1555.0 552.5,1550.7 556.5,1546.6 560.5,1542.9 564.5,1539.6 568.5,1536.5 572.5,1533.9 576.5,1531.6 580.5,1529.7 584.5,1528.2 588.5,1527.1 592.5,1526.4 596.5,1526.1 600.5,1526.2 604.5,1526.7 608.5,1527.6 612.5,1528.9 616.5,1530.6 620.5,1532.7 624.5,1535.2 628.5,1538.0 632.5,1541.2 636.5,1544.7 640.5,1548.6 644.5,1552.8 648.5,1557.3 652.5,1562.0 656.5,1567.1 660.5,1572.3 664.5,1577.8 668.5,1583.5 672.5,1589.4 676.5,1595.4 680.5,1601.5 684.5,1607.8 688.5,1614.1 692.5,1620.5 696.5,1626.9 700.5,1633.3 704.5,1639.7 708.5,1646.0 712.5,1652.3 716.5,1658.5 720.5,1664.5 724.5,1670.4 728.5,1676.1 732.5,1681.6 736.5,1687.0 740.5,1692.0 744.5,1696.8 748.5,1701.4 752.5,1705.6 756.5,1709.6 760.5,1713.2 764.5,1716.4 768.5,1719.3 772.5,1721.9 776.5,1724.0 780.5,1725.8 784.5,1727.2 788.5,1728.2 792.5,1728.8 796.5,1728.9 800.5,1728.7 804.5,1728.1 808.5,1727.0 812.5,1725.6 816.5,1723.8 820.5,1721.6 824.5,1719.0 828.5,1716.0 832.5,1712.7 836.5,1709.1 840.5,1705.1 844.5,1700.8 848.5,1696.3 852.5,1691.4 856.5,1686.3 860.5,1681.0 864.5,1675.4 868.5,1669.7 872.5,1663.8 876.5,1657.7 880.5,1651.5 884.5,1645.2 888.5,1638.9 892.5,1632.5 896.5,1626.1 900.5,1619.7 904.5,1613.3 908.5,1607.0 912.5,1600.8 916.5,1594.6 920.5,1588.6 924.5,1582.8 928.5,1577.1 932.5,1571.7 936.5,1566.4 940.5,1561.4 944.5,1556.7 948.5,1552.3 952.5,1548.1 956.5,1544.3 960.5,1540.8 964.5,1537.6 968.5,1534.8 972.5,1532.4 976.5,1530.4 980.5,1528.7 984.5,1527.5 988.5,1526.6 992.5,1526.1 996.5,1526.1 1000.5,1526.5 1004.5,1527.2 1008.5,1528.4 1012.5,1529.9 1016.5,1531.9 1020.5,1534.2 1024.5,1536.9 1028.5,1540.0 1032.5,1543.4 1036.5,1547.1 1040.5,1551.2 1044.5,1555.6 1048.5,1560.2 1052.5,1565.2 1056.5,1570.3 1060.5,1575.7 1064.5,1581.4 1068.5,1587.2 1072.5,1593.1 1076.5,1599.2 1080.5,1605.4 1084.5,1611.7 1088.5,1618.1 1092.5,1624.5 1096.5,1630.9 1100.5,1637.3 1104.5,1643.7 1108.5,1650.0 1112.5,1656.2 1116.5,1662.3 1120.5,1668.2 1124.5,1674.0 1128.5,1679.6 1132.5,1685.0 1136.5,1690.2 1140.5,1695.1 1144.5,1699.7 1148.5,1704.1 1152.5,1708.1 1156.5,1711.8 1160.5,1715.2 1164.5,1718.3 1168.5,1721.0 1172.5,1723.3 1176.5,1725.2 1180.5,1726.7 1184.5,1727.8 1188.5,1728.6 1192.5,1728.9 1196.5,1728.8 1200.5,1728.4 1204.5,1727.5 1208.5,1726.2 1212.5,1724.5 1216.5,1722.4 1220.5,1720.0 1224.5,1717.2 1228.5,1714.0" fill="none" stroke="#ff2424" stroke-width="2.1" stroke-linejoin="round"/>
<rect x="226.0" y="1313.0" width="1003.5" height="3.0" fill="#5e5e5e" />
<rect x="225.5" y="1313.0" width="2.8" height="629.0" fill="#5e5e5e" />
<rect x="210.0" y="1315.6" width="12.5" height="2.8" fill="#222" />
<rect x="1237.0" y="1315.6" width="12.5" height="2.8" fill="#222" />
<text x="203.0" y="1329.0" font-size="33" stroke="#000" stroke-width="0.35" fill="#000" text-anchor="end" textLength="43.0" lengthAdjust="spacingAndGlyphs" >0.3</text>
<text x="1252.0" y="1329.0" font-size="33" stroke="#000" stroke-width="0.35" fill="#000" text-anchor="start" textLength="43.0" lengthAdjust="spacingAndGlyphs" >0.3</text>
<rect x="210.0" y="1419.1" width="12.5" height="2.8" fill="#222" />
<rect x="1237.0" y="1419.1" width="12.5" height="2.8" fill="#222" />
<text x="203.0" y="1432.5" font-size="33" stroke="#000" stroke-width="0.35" fill="#000" text-anchor="end" textLength="43.0" lengthAdjust="spacingAndGlyphs" >0.2</text>
<text x="1252.0" y="1432.5" font-size="33" stroke="#000" stroke-width="0.35" fill="#000" text-anchor="start" textLength="43.0" lengthAdjust="spacingAndGlyphs" >0.2</text>
<rect x="210.0" y="1522.6" width="12.5" height="2.8" fill="#222" />
<rect x="1237.0" y="1522.6" width="12.5" height="2.8" fill="#222" />
<text x="203.0" y="1536.0" font-size="33" stroke="#000" stroke-width="0.35" fill="#000" text-anchor="end" textLength="43.0" lengthAdjust="spacingAndGlyphs" >0.1</text>
<text x="1252.0" y="1536.0" font-size="33" stroke="#000" stroke-width="0.35" fill="#000" text-anchor="start" textLength="43.0" lengthAdjust="spacingAndGlyphs" >0.1</text>
<rect x="210.0" y="1626.1" width="12.5" height="2.8" fill="#222" />
<rect x="1237.0" y="1626.1" width="12.5" height="2.8" fill="#222" />
<text x="203.0" y="1639.5" font-size="33" stroke="#000" stroke-width="0.35" fill="#000" text-anchor="end" textLength="18.5" lengthAdjust="spacingAndGlyphs" >0</text>
<text x="1252.0" y="1639.5" font-size="33" stroke="#000" stroke-width="0.35" fill="#000" text-anchor="start" textLength="18.5" lengthAdjust="spacingAndGlyphs" >0</text>
<rect x="210.0" y="1729.6" width="12.5" height="2.8" fill="#222" />
<rect x="1237.0" y="1729.6" width="12.5" height="2.8" fill="#222" />
<text x="203.0" y="1743.0" font-size="33" stroke="#000" stroke-width="0.35" fill="#000" text-anchor="end" textLength="57.0" lengthAdjust="spacingAndGlyphs" >-0.1</text>
<text x="1252.0" y="1743.0" font-size="33" stroke="#000" stroke-width="0.35" fill="#000" text-anchor="start" textLength="57.0" lengthAdjust="spacingAndGlyphs" >-0.1</text>
<rect x="210.0" y="1833.1" width="12.5" height="2.8" fill="#222" />
<rect x="1237.0" y="1833.1" width="12.5" height="2.8" fill="#222" />
<text x="203.0" y="1846.5" font-size="33" stroke="#000" stroke-width="0.35" fill="#000" text-anchor="end" textLength="58.0" lengthAdjust="spacingAndGlyphs" >-0.2</text>
<text x="1252.0" y="1846.5" font-size="33" stroke="#000" stroke-width="0.35" fill="#000" text-anchor="start" textLength="58.0" lengthAdjust="spacingAndGlyphs" >-0.2</text>
<rect x="210.0" y="1936.6" width="12.5" height="2.8" fill="#222" />
<rect x="1237.0" y="1936.6" width="12.5" height="2.8" fill="#222" />
<text x="203.0" y="1950.0" font-size="33" stroke="#000" stroke-width="0.35" fill="#000" text-anchor="end" textLength="58.0" lengthAdjust="spacingAndGlyphs" >-0.3</text>
<text x="1252.0" y="1950.0" font-size="33" stroke="#000" stroke-width="0.35" fill="#000" text-anchor="start" textLength="58.0" lengthAdjust="spacingAndGlyphs" >-0.3</text>
<rect x="227.2" y="1947.0" width="2.6" height="7.0" fill="#222" />
<rect x="247.2" y="1947.0" width="2.6" height="7.0" fill="#222" />
<rect x="267.2" y="1947.0" width="2.6" height="7.0" fill="#222" />
<rect x="287.2" y="1947.0" width="2.6" height="7.0" fill="#222" />
<rect x="307.2" y="1947.0" width="2.6" height="7.0" fill="#222" />
<rect x="327.2" y="1947.0" width="2.6" height="7.0" fill="#222" />
<rect x="347.2" y="1947.0" width="2.6" height="7.0" fill="#222" />
<rect x="367.2" y="1947.0" width="2.6" height="7.0" fill="#222" />
<rect x="387.2" y="1947.0" width="2.6" height="7.0" fill="#222" />
<rect x="407.2" y="1947.0" width="2.6" height="7.0" fill="#222" />
<rect x="427.2" y="1947.0" width="2.6" height="7.0" fill="#222" />
<rect x="447.2" y="1947.0" width="2.6" height="7.0" fill="#222" />
<rect x="467.2" y="1947.0" width="2.6" height="7.0" fill="#222" />
<rect x="487.2" y="1947.0" width="2.6" height="7.0" fill="#222" />
<rect x="507.2" y="1947.0" width="2.6" height="7.0" fill="#222" />
<rect x="527.2" y="1947.0" width="2.6" height="7.0" fill="#222" />
<rect x="547.2" y="1947.0" width="2.6" height="7.0" fill="#222" />
<rect x="567.2" y="1947.0" width="2.6" height="7.0" fill="#222" />
<rect x="587.2" y="1947.0" width="2.6" height="7.0" fill="#222" />
<rect x="607.2" y="1947.0" width="2.6" height="7.0" fill="#222" />
<rect x="627.2" y="1947.0" width="2.6" height="7.0" fill="#222" />
<rect x="647.2" y="1947.0" width="2.6" height="7.0" fill="#222" />
<rect x="667.2" y="1947.0" width="2.6" height="7.0" fill="#222" />
<rect x="687.2" y="1947.0" width="2.6" height="7.0" fill="#222" />
<rect x="707.2" y="1947.0" width="2.6" height="7.0" fill="#222" />
<rect x="727.2" y="1947.0" width="2.6" height="7.0" fill="#222" />
<rect x="747.2" y="1947.0" width="2.6" height="7.0" fill="#222" />
<rect x="767.2" y="1947.0" width="2.6" height="7.0" fill="#222" />
<rect x="787.2" y="1947.0" width="2.6" height="7.0" fill="#222" />
<rect x="807.2" y="1947.0" width="2.6" height="7.0" fill="#222" />
<rect x="827.2" y="1947.0" width="2.6" height="7.0" fill="#222" />
<rect x="847.2" y="1947.0" width="2.6" height="7.0" fill="#222" />
<rect x="867.2" y="1947.0" width="2.6" height="7.0" fill="#222" />
<rect x="887.2" y="1947.0" width="2.6" height="7.0" fill="#222" />
<rect x="907.2" y="1947.0" width="2.6" height="7.0" fill="#222" />
<rect x="927.2" y="1947.0" width="2.6" height="7.0" fill="#222" />
<rect x="947.2" y="1947.0" width="2.6" height="7.0" fill="#222" />
<rect x="967.2" y="1947.0" width="2.6" height="7.0" fill="#222" />
<rect x="987.2" y="1947.0" width="2.6" height="7.0" fill="#222" />
<rect x="1007.2" y="1947.0" width="2.6" height="7.0" fill="#222" />
<rect x="1027.2" y="1947.0" width="2.6" height="7.0" fill="#222" />
<rect x="1047.2" y="1947.0" width="2.6" height="7.0" fill="#222" />
<rect x="1067.2" y="1947.0" width="2.6" height="7.0" fill="#222" />
<rect x="1087.2" y="1947.0" width="2.6" height="7.0" fill="#222" />
<rect x="1107.2" y="1947.0" width="2.6" height="7.0" fill="#222" />
<rect x="1127.2" y="1947.0" width="2.6" height="7.0" fill="#222" />
<rect x="1147.2" y="1947.0" width="2.6" height="7.0" fill="#222" />
<rect x="1167.2" y="1947.0" width="2.6" height="7.0" fill="#222" />
<rect x="1187.2" y="1947.0" width="2.6" height="7.0" fill="#222" />
<rect x="1207.2" y="1947.0" width="2.6" height="7.0" fill="#222" />
<rect x="1227.2" y="1947.0" width="2.6" height="7.0" fill="#222" />
<rect x="227.1" y="1945.0" width="2.8" height="14.0" fill="#222" />
<rect x="347.1" y="1945.0" width="2.8" height="14.0" fill="#222" />
<rect x="547.1" y="1945.0" width="2.8" height="14.0" fill="#222" />
<rect x="747.1" y="1945.0" width="2.8" height="14.0" fill="#222" />
<rect x="947.1" y="1945.0" width="2.8" height="14.0" fill="#222" />
<rect x="1147.1" y="1945.0" width="2.8" height="14.0" fill="#222" />
<rect x="1227.1" y="1945.0" width="2.8" height="14.0" fill="#222" />
<text x="226.5" y="1991.5" font-size="32.5" stroke="#000" stroke-width="0.35" fill="#000" text-anchor="middle" textLength="179.0" lengthAdjust="spacingAndGlyphs" >01:00:54.403</text>
<text x="226.5" y="2033.0" font-size="32.5" stroke="#000" stroke-width="0.35" fill="#000" text-anchor="middle" textLength="165.0" lengthAdjust="spacingAndGlyphs" >01/01/1904</text>
<text x="545.0" y="1991.5" font-size="32.5" stroke="#000" stroke-width="0.35" fill="#000" text-anchor="middle" textLength="179.0" lengthAdjust="spacingAndGlyphs" >01:00:56.000</text>
<text x="545.0" y="2033.0" font-size="32.5" stroke="#000" stroke-width="0.35" fill="#000" text-anchor="middle" textLength="165.0" lengthAdjust="spacingAndGlyphs" >01/01/1904</text>
<text x="746.5" y="1991.5" font-size="32.5" stroke="#000" stroke-width="0.35" fill="#000" text-anchor="middle" textLength="179.0" lengthAdjust="spacingAndGlyphs" >01:00:57.000</text>
<text x="746.5" y="2033.0" font-size="32.5" stroke="#000" stroke-width="0.35" fill="#000" text-anchor="middle" textLength="165.0" lengthAdjust="spacingAndGlyphs" >01/01/1904</text>
<text x="945.0" y="1991.5" font-size="32.5" stroke="#000" stroke-width="0.35" fill="#000" text-anchor="middle" textLength="179.0" lengthAdjust="spacingAndGlyphs" >01:00:58.000</text>
<text x="945.0" y="2033.0" font-size="32.5" stroke="#000" stroke-width="0.35" fill="#000" text-anchor="middle" textLength="165.0" lengthAdjust="spacingAndGlyphs" >01/01/1904</text>
<text x="1226.0" y="1991.5" font-size="32.5" stroke="#000" stroke-width="0.35" fill="#000" text-anchor="middle" textLength="179.0" lengthAdjust="spacingAndGlyphs" >01:00:59.403</text>
<text x="1226.0" y="2033.0" font-size="32.5" stroke="#000" stroke-width="0.35" fill="#000" text-anchor="middle" textLength="165.0" lengthAdjust="spacingAndGlyphs" >01/01/1904</text>
<text x="605.5" y="2077.5" font-size="33.5" stroke="#000" stroke-width="0.35" fill="#000" text-anchor="start" textLength="246.5" lengthAdjust="spacingAndGlyphs" >Simulation Time</text>
<text transform="translate(125.5 1713.5) rotate(-90)" font-size="33.5" textLength="177" lengthAdjust="spacingAndGlyphs">Distance (m)</text>
<text transform="translate(1331 1543) rotate(90)" font-size="33.5" textLength="160" lengthAdjust="spacingAndGlyphs">Angle (rad)</text>
<text x="1431.5" y="1471.0" font-size="33.5" stroke="#000" stroke-width="0.35" fill="#000" text-anchor="start" textLength="21.0" lengthAdjust="spacingAndGlyphs" >X</text>
<text x="1431.5" y="1532.7" font-size="33.5" stroke="#000" stroke-width="0.35" fill="#000" text-anchor="start" textLength="82.0" lengthAdjust="spacingAndGlyphs" >Theta</text>
<text x="1431.5" y="1594.6" font-size="33.5" stroke="#000" stroke-width="0.35" fill="#000" text-anchor="start" textLength="66.5" lengthAdjust="spacingAndGlyphs" >SP X</text>
<rect x="1562.0" y="1437.5" width="83.5" height="50.0" fill="#f6f6f6" />
<rect x="1562.0" y="1437.5" width="81.0" height="3.2" fill="#7a7a7a" />
<rect x="1562.0" y="1437.5" width="3.6" height="47.5" fill="#7a7a7a" />
<rect x="1565.6" y="1440.7" width="77.0" height="44.0" fill="#fff" />
<polyline points="1567,1475 1596,1447 1625,1474 1638,1461" fill="none" stroke="#3a3af2" stroke-width="2.1" stroke-linejoin="round"/>
<rect x="1562.0" y="1498.0" width="83.5" height="50.0" fill="#f6f6f6" />
<rect x="1562.0" y="1498.0" width="81.0" height="3.2" fill="#7a7a7a" />
<rect x="1562.0" y="1498.0" width="3.6" height="47.5" fill="#7a7a7a" />
<rect x="1565.6" y="1501.2" width="77.0" height="44.0" fill="#fff" />
<polyline points="1567,1534 1590,1508 1614,1534 1638,1508" fill="none" stroke="#ff3030" stroke-width="2.1" stroke-linejoin="round"/>
<rect x="1562.0" y="1560.5" width="83.5" height="50.0" fill="#f6f6f6" />
<rect x="1562.0" y="1560.5" width="81.0" height="3.2" fill="#7a7a7a" />
<rect x="1562.0" y="1560.5" width="3.6" height="47.5" fill="#7a7a7a" />
<rect x="1565.6" y="1563.7" width="77.0" height="44.0" fill="#fff" />
<polyline points="1567,1596 1590,1570 1614,1596 1638,1570" fill="none" stroke="#10e840" stroke-width="2.1" stroke-linejoin="round"/>
<linearGradient id="f3t" x1="0" y1="0" x2="0" y2="1"><stop offset="0" stop-color="#e6e6e6"/><stop offset="1" stop-color="#fbfbfb"/></linearGradient>
<rect x="1662.5" y="286.5" width="2486.5" height="1805.5" fill="#ececec" />
<rect x="1666.0" y="290.0" width="2479.5" height="1798.5" fill="#f6f6f6" />
<rect x="1669.5" y="293.5" width="2472.0" height="1792.0" fill="#000" />
<rect x="1671.0" y="295.0" width="2470.0" height="1790.0" fill="#181818" />
<linearGradient id="pd" x1="0" y1="0" x2="1" y2="0"><stop offset="0" stop-color="#9aa2d0"/><stop offset="1" stop-color="#7f86b4"/></linearGradient>
<linearGradient id="pl" x1="0" y1="0" x2="1" y2="0"><stop offset="0" stop-color="#c0c5f2"/><stop offset=".8" stop-color="#ccd1fb"/><stop offset="1" stop-color="#e0e4ff"/></linearGradient>
<rect x="2637.6" y="520.0" width="40.8" height="760.0" fill="#000" />
<rect x="2638.8" y="520.0" width="17.6" height="760.0" fill="url(#pd)" />
<rect x="2658.0" y="520.0" width="19.0" height="760.0" fill="url(#pl)" />
<rect x="3045.6" y="520.0" width="40.8" height="760.0" fill="#000" />
<rect x="3046.8" y="520.0" width="17.6" height="760.0" fill="url(#pd)" />
<rect x="3066.0" y="520.0" width="19.0" height="760.0" fill="url(#pl)" />
<linearGradient id="capl" x1="0" y1="0" x2="1" y2="0"><stop offset="0" stop-color="#7a80b0"/><stop offset=".35" stop-color="#a6acdc"/><stop offset="1" stop-color="#ced3fb"/></linearGradient>
<linearGradient id="capr" x1="0" y1="0" x2="1" y2="0"><stop offset="0" stop-color="#d4d8fc"/><stop offset=".7" stop-color="#c6cbf6"/><stop offset="1" stop-color="#9aa0d0"/></linearGradient>
<rect x="2610.0" y="495.2" width="505.0" height="29.8" fill="#000" rx="4"/>
<rect x="2611.6" y="496.6" width="91.0" height="27.0" fill="url(#capl)" rx="3"/>
<rect x="2705.2" y="496.6" width="313.2" height="27.0" fill="#c9cefa" />
<rect x="3021.4" y="496.6" width="90.8" height="27.0" fill="url(#capr)" rx="3"/>
<rect x="2610.0" y="882.8" width="505.0" height="26.2" fill="#000" rx="4"/>
<rect x="2611.6" y="884.2" width="91.0" height="23.4" fill="url(#capl)" rx="3"/>
<rect x="2705.2" y="884.2" width="313.2" height="23.4" fill="#c9cefa" />
<rect x="3021.4" y="884.2" width="90.8" height="23.4" fill="url(#capr)" rx="3"/>
<circle cx="2875.0" cy="1443.0" r="308" fill="#2a2a2a"/>
<circle cx="2875.0" cy="1443.0" r="304.5" fill="none" stroke="#4c4c4c" stroke-width="6" stroke-dasharray="6.5 2.6"/>
<circle cx="2875.0" cy="1443.0" r="304.5" fill="none" stroke="#9a9a9a" stroke-width="4.5" stroke-dasharray="3 33.4" opacity=".8"/>
<circle cx="2875.0" cy="1443.0" r="300" fill="#242424"/>
<circle cx="2875.0" cy="1443.0" r="297.5" fill="#505154"/>
<circle cx="2875.0" cy="1443.0" r="292" fill="#4d4e51" stroke="#0c0c0c" stroke-width="2.4"/>
<circle cx="2875.0" cy="1443.0" r="253" fill="#1b1b1b" stroke="#050505" stroke-width="2.4"/>
<defs>
<mask id="mrear" maskUnits="userSpaceOnUse" x="2560" y="1130" width="630" height="630"><rect x="2560" y="1130" width="630" height="630" fill="#fff"/><path d="M2850.4 1501.4 L2829.7 1632.3 A194.6 194.6 0 0 1 2735.1 1578.3 L2837.2 1493.9 A63.4 63.4 0 0 0 2850.4 1501.4 Z M2814.0 1460.2 L2698.7 1525.6 A194.6 194.6 0 0 1 2682.0 1417.9 L2811.6 1445.2 A63.4 63.4 0 0 0 2814.0 1460.2 Z M2823.5 1406.0 L2700.5 1356.7 A194.6 194.6 0 0 1 2774.2 1276.5 L2833.8 1394.8 A63.4 63.4 0 0 0 2823.5 1406.0 Z M2871.8 1379.7 L2833.7 1252.8 A194.6 194.6 0 0 1 2942.4 1260.4 L2886.9 1380.7 A63.4 63.4 0 0 0 2871.8 1379.7 Z M2922.5 1401.1 L2998.0 1292.1 A194.6 194.6 0 0 1 3059.8 1381.8 L2931.1 1413.5 A63.4 63.4 0 0 0 2922.5 1401.1 Z M2937.4 1454.0 L3069.6 1445.1 A194.6 194.6 0 0 1 3038.0 1549.3 L2933.1 1468.5 A63.4 63.4 0 0 0 2937.4 1454.0 Z M2905.3 1498.7 L2994.7 1596.5 A194.6 194.6 0 0 1 2893.5 1636.8 L2891.3 1504.3 A63.4 63.4 0 0 0 2905.3 1498.7 Z" fill="#000" stroke="#000" stroke-width="30" stroke-linejoin="round"/></mask>
<mask id="mrearb" maskUnits="userSpaceOnUse" x="2560" y="1130" width="630" height="630"><rect x="2560" y="1130" width="630" height="630" fill="#fff"/><path d="M2850.4 1501.4 L2829.7 1632.3 A194.6 194.6 0 0 1 2735.1 1578.3 L2837.2 1493.9 A63.4 63.4 0 0 0 2850.4 1501.4 Z M2814.0 1460.2 L2698.7 1525.6 A194.6 194.6 0 0 1 2682.0 1417.9 L2811.6 1445.2 A63.4 63.4 0 0 0 2814.0 1460.2 Z M2823.5 1406.0 L2700.5 1356.7 A194.6 194.6 0 0 1 2774.2 1276.5 L2833.8 1394.8 A63.4 63.4 0 0 0 2823.5 1406.0 Z M2871.8 1379.7 L2833.7 1252.8 A194.6 194.6 0 0 1 2942.4 1260.4 L2886.9 1380.7 A63.4 63.4 0 0 0 2871.8 1379.7 Z M2922.5 1401.1 L2998.0 1292.1 A194.6 194.6 0 0 1 3059.8 1381.8 L2931.1 1413.5 A63.4 63.4 0 0 0 2922.5 1401.1 Z M2937.4 1454.0 L3069.6 1445.1 A194.6 194.6 0 0 1 3038.0 1549.3 L2933.1 1468.5 A63.4 63.4 0 0 0 2937.4 1454.0 Z M2905.3 1498.7 L2994.7 1596.5 A194.6 194.6 0 0 1 2893.5 1636.8 L2891.3 1504.3 A63.4 63.4 0 0 0 2905.3 1498.7 Z" fill="#000" stroke="#000" stroke-width="26" stroke-linejoin="round"/></mask>
<mask id="mfront" maskUnits="userSpaceOnUse" x="2560" y="1130" width="630" height="630"><rect x="2560" y="1130" width="630" height="630" fill="#fff"/><path d="M2895.5 1383.0 L2908.0 1251.0 A194.8 194.8 0 0 1 3004.5 1297.5 L2909.1 1389.6 A63.4 63.4 0 0 0 2895.5 1383.0 Z M2934.7 1421.6 L3045.7 1349.1 A194.8 194.8 0 0 1 3069.5 1453.6 L2938.1 1436.4 A63.4 63.4 0 0 0 2934.7 1421.6 Z M2928.9 1476.3 L3054.8 1517.9 A194.8 194.8 0 0 1 2988.0 1601.7 L2919.5 1488.2 A63.4 63.4 0 0 0 2928.9 1476.3 Z M2882.6 1506.0 L2928.6 1630.3 A194.8 194.8 0 0 1 2821.4 1630.3 L2867.4 1506.0 A63.4 63.4 0 0 0 2882.6 1506.0 Z M2830.5 1488.2 L2762.0 1601.7 A194.8 194.8 0 0 1 2695.2 1517.9 L2821.1 1476.3 A63.4 63.4 0 0 0 2830.5 1488.2 Z M2811.9 1436.4 L2680.5 1453.6 A194.8 194.8 0 0 1 2704.3 1349.1 L2815.3 1421.6 A63.4 63.4 0 0 0 2811.9 1436.4 Z M2840.9 1389.6 L2745.5 1297.5 A194.8 194.8 0 0 1 2842.0 1251.0 L2854.5 1383.0 A63.4 63.4 0 0 0 2840.9 1389.6 Z" fill="#000" stroke="#000" stroke-width="30" stroke-linejoin="round"/></mask>
<mask id="mfrontb" maskUnits="userSpaceOnUse" x="2560" y="1130" width="630" height="630"><rect x="2560" y="1130" width="630" height="630" fill="#fff"/><path d="M2895.5 1383.0 L2908.0 1251.0 A194.8 194.8 0 0 1 3004.5 1297.5 L2909.1 1389.6 A63.4 63.4 0 0 0 2895.5 1383.0 Z M2934.7 1421.6 L3045.7 1349.1 A194.8 194.8 0 0 1 3069.5 1453.6 L2938.1 1436.4 A63.4 63.4 0 0 0 2934.7 1421.6 Z M2928.9 1476.3 L3054.8 1517.9 A194.8 194.8 0 0 1 2988.0 1601.7 L2919.5 1488.2 A63.4 63.4 0 0 0 2928.9 1476.3 Z M2882.6 1506.0 L2928.6 1630.3 A194.8 194.8 0 0 1 2821.4 1630.3 L2867.4 1506.0 A63.4 63.4 0 0 0 2882.6 1506.0 Z M2830.5 1488.2 L2762.0 1601.7 A194.8 194.8 0 0 1 2695.2 1517.9 L2821.1 1476.3 A63.4 63.4 0 0 0 2830.5 1488.2 Z M2811.9 1436.4 L2680.5 1453.6 A194.8 194.8 0 0 1 2704.3 1349.1 L2815.3 1421.6 A63.4 63.4 0 0 0 2811.9 1436.4 Z M2840.9 1389.6 L2745.5 1297.5 A194.8 194.8 0 0 1 2842.0 1251.0 L2854.5 1383.0 A63.4 63.4 0 0 0 2840.9 1389.6 Z" fill="#000" stroke="#000" stroke-width="26" stroke-linejoin="round"/></mask>
<clipPath id="cin"><circle cx="2875.0" cy="1443.0" r="212"/></clipPath>
</defs>
<g clip-path="url(#cin)"><circle cx="2875.0" cy="1443.0" r="214" fill="#06060c" mask="url(#mrearb)"/><circle cx="2875.0" cy="1443.0" r="214" fill="#8585ff" mask="url(#mrear)"/></g>
<g clip-path="url(#cin)" stroke="#0a0a0a" stroke-width="2">
<clipPath id="cbot"><polygon points="2875.0,1443.0 2815.0,1603.0 2935.0,1603.0"/></clipPath>
<circle cx="2875.0" cy="1443.0" r="137" fill="#ccd0fb" clip-path="url(#cbot)"/>
<circle cx="2875.0" cy="1443.0" r="122" fill="#c6cafa"/>
<rect x="2754" y="1290" width="244.5" height="164" fill="#c6cafa" stroke="none"/>
<path d="M2754 1454 V1293 M2998.5 1293 V1454" fill="none"/>
<rect x="2738" y="1273.5" width="272" height="20" fill="#ccd0fb"/>
</g>
<circle cx="2875.0" cy="1443.0" r="252" fill="#06060c" mask="url(#mfrontb)"/>
<circle cx="2875.0" cy="1443.0" r="252" fill="#8585ff" mask="url(#mfront)"/>
<circle cx="2875.0" cy="1443.0" r="252" fill="none" stroke="#0c0c2a" stroke-width="2.6"/>
<circle cx="2875.0" cy="1443.0" r="245" fill="none" stroke="#0c0c2a" stroke-width="2.2"/>
<circle cx="2875.0" cy="1443.0" r="241.5" fill="none" stroke="#0c0c2a" stroke-width="1.4"/>
<circle cx="2875.0" cy="1443.0" r="228" fill="none" stroke="#0c0c2a" stroke-width="2.2"/>
<circle cx="2875.0" cy="1443.0" r="215" fill="none" stroke="#0c0c2a" stroke-width="1.6"/>
<circle cx="2875.0" cy="1443.0" r="44.5" fill="#8585ff" stroke="#06060c" stroke-width="2.4"/>
<circle cx="2875.0" cy="1443.0" r="27.5" fill="#8585ff" stroke="#06060c" stroke-width="2.2"/>
<polygon points="2884.2,1443.0 2879.6,1451.0 2870.4,1451.0 2865.8,1443.0 2870.4,1435.0 2879.6,1435.0" fill="#c6cafa" stroke="#06060c" stroke-width="2"/>
</svg>
</body></html>
